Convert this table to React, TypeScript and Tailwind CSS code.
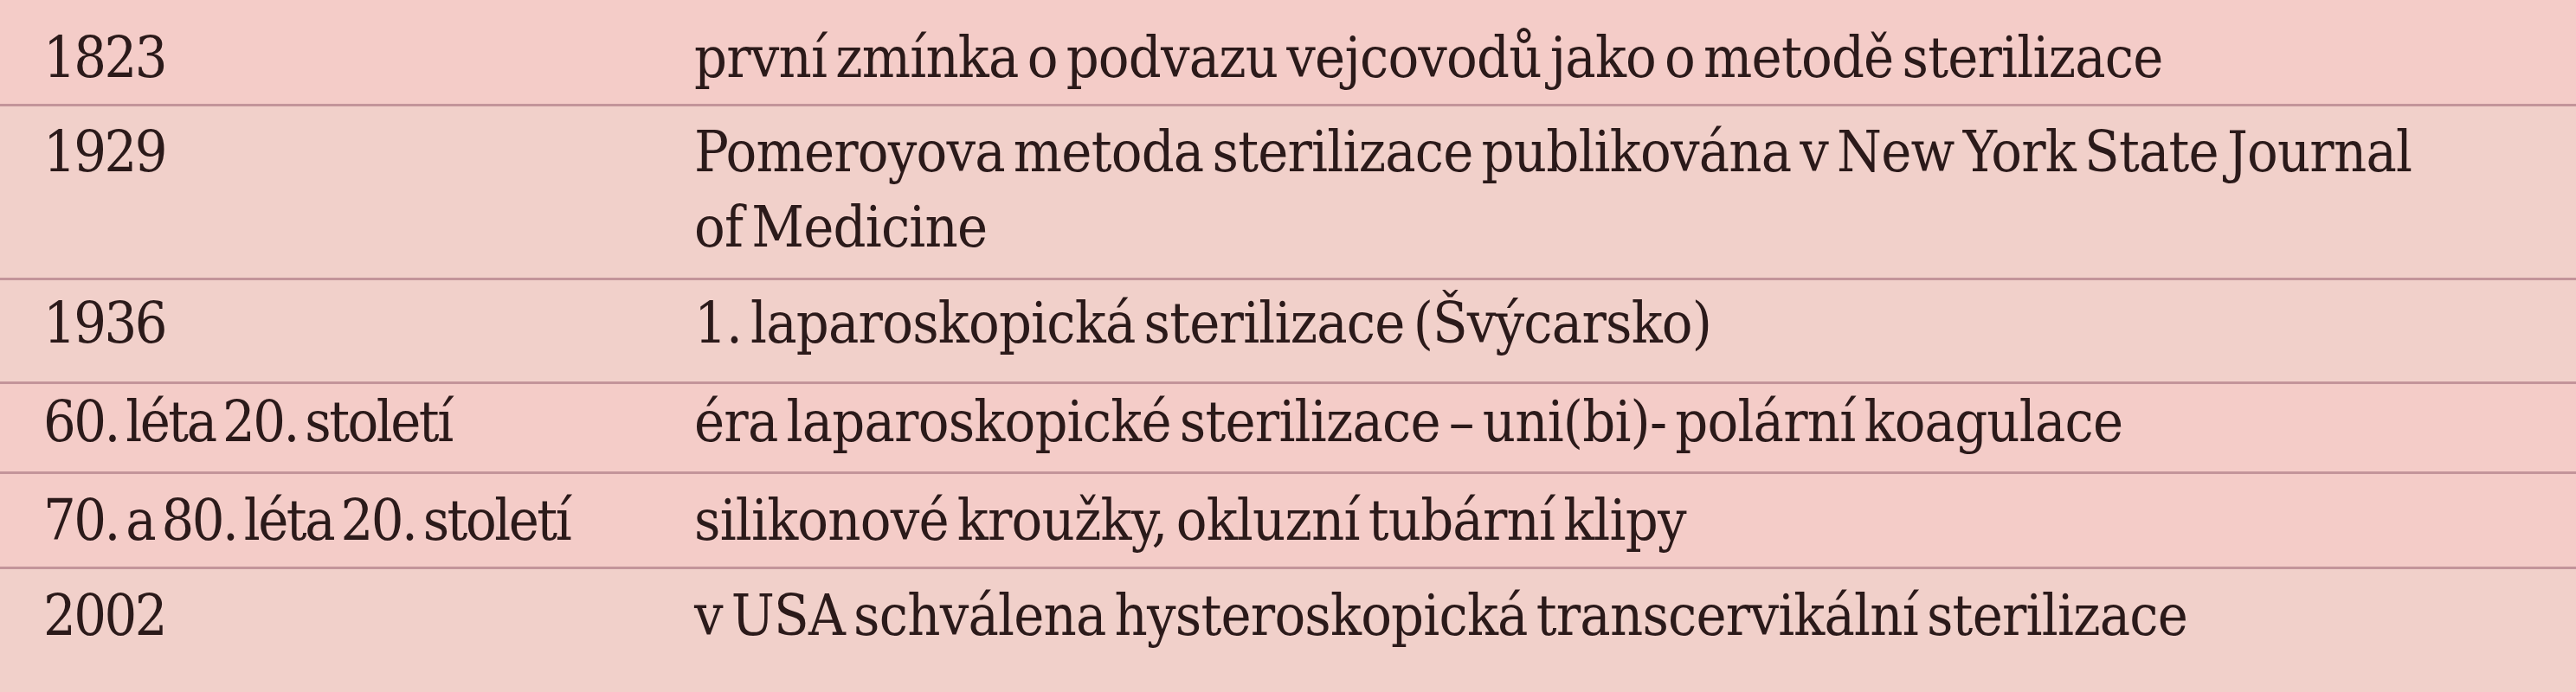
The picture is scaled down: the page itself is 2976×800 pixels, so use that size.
const rows = [
  { year: "1823", text: ["první zmínka o podvazu vejcovodů jako o metodě sterilizace"], h: "h-[123px]", pt: "pt-[23px]", bg: "bg-[#f4ccc8]" },
  { year: "1929", text: ["Pomeroyova metoda sterilizace publikována v New York State Journal", "of Medicine"], h: "h-[201px]", pt: "pt-[9px]", bg: "bg-[#f1d0ca]" },
  { year: "1936", text: ["1. laparoskopická sterilizace (Švýcarsko)"], h: "h-[120px]", pt: "pt-[6px]", bg: "bg-[#f1d0ca]" },
  { year: "60. léta 20. století", text: ["éra laparoskopické sterilizace – uni(bi)- polární koagulace"], h: "h-[104px]", pt: "pt-[0px]", bg: "bg-[#f4ccc8]" },
  { year: "70. a 80. léta 20. století", text: ["silikonové kroužky, okluzní tubární klipy"], h: "h-[110px]", pt: "pt-[10px]", bg: "bg-[#f4ccc8]" },
  { year: "2002", text: ["v USA schválena hysteroskopická transcervikální sterilizace"], h: "h-[142px]", pt: "pt-[10px]", bg: "bg-[#f1d0ca]" },
];

export default function App() {
  return (
    <div className="w-[2976px] h-[800px] overflow-hidden bg-[#f1d0ca] text-[#2b1a1a] font-['DejaVu_Serif_Condensed','DejaVu_Serif',serif] font-stretch-condensed text-[66px] leading-[87px] [word-spacing:-8px]">
      {rows.map((row, i) => (
        <div
          key={i}
          className={`grid grid-cols-[802px_1fr] ${row.h} ${row.bg} ${i < rows.length - 1 ? "border-b-[3px] border-[#c3949a]" : ""}`}
        >
          <div className={`pl-[50px] ${row.pt} whitespace-nowrap tracking-[-2.5px]`}>{row.year}</div>
          <div className={`${row.pt} tracking-[-0.8px]`}>
            {row.text.map((line, j) => (
              <div key={j} className="whitespace-nowrap">{line}</div>
            ))}
          </div>
        </div>
      ))}
    </div>
  );
}
